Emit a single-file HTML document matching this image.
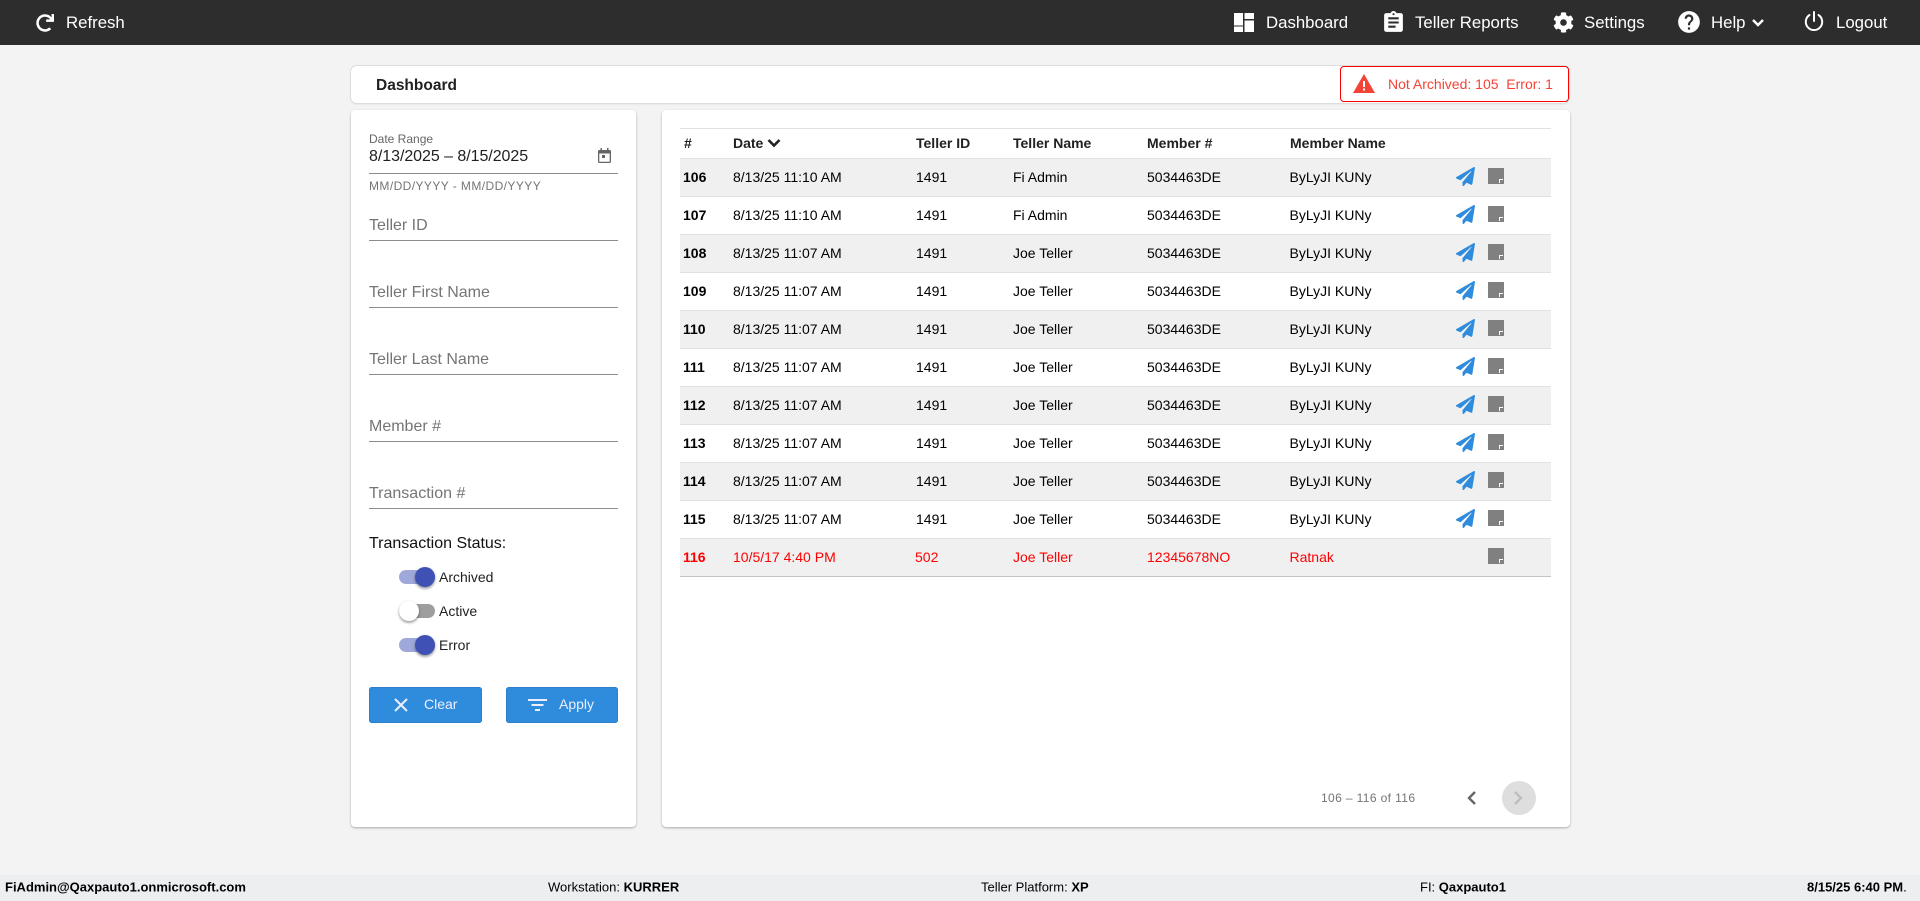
<!DOCTYPE html>
<html lang="en"><head><meta charset="utf-8"><title>Dashboard</title>
<style>
html,body{margin:0;padding:0;width:1920px;height:901px;overflow:hidden;background:#f3f3f3;font-family:"Liberation Sans",Arial,sans-serif;color:#000}
.a{position:absolute;white-space:nowrap}
.t{position:absolute;white-space:nowrap;transform:translateY(-50%)}
#top{position:absolute;left:0;top:0;width:1920px;height:45px;background:#2d2d2d}
#top .t{color:#fff;font-size:16.8px;top:23px}
#top svg{position:absolute;fill:#fff}
.card{position:absolute;background:#fff;border-radius:4px;box-shadow:0 1px 2px rgba(0,0,0,.3)}
.line{position:absolute;left:369px;width:249px;height:1px;background:#8c8c8c}
.ph{position:absolute;left:369px;font-size:16px;color:#757575;white-space:nowrap;transform:translateY(-50%)}
.row{position:absolute;left:680px;width:871px;height:37px;border-bottom:1px solid #e0e0e6;font-size:14px;line-height:36px}
.row.g{background:#f0f0f1}
.row span{position:absolute;top:0;white-space:nowrap}
.c0{left:3px;font-weight:700}.c1{left:53px}.c2{left:236px}.c3{left:333px}.c4{left:467px}.c5{left:609.500px}
.row svg{position:absolute}
.red,.red span{color:#f00}
.hd{position:absolute;top:142.500px;font-size:14px;font-weight:700;color:#212121;transform:translateY(-50%);white-space:nowrap}
.tr{position:absolute;left:399px;width:36px;height:14px;border-radius:7px}
.th{position:absolute;width:20px;height:20px;border-radius:50%;box-shadow:0 2px 2px rgba(0,0,0,.25),0 1px 3px rgba(0,0,0,.2)}
.lb{position:absolute;left:439px;font-size:14px;color:#212121;transform:translateY(-50%)}
.btn{position:absolute;top:687px;height:36px;background:#2f8cdd;border-radius:3px;box-shadow:inset 0 0 0 1px #2b80c9}
.btn span{position:absolute;top:17px;transform:translateY(-50%);color:#eef;font-size:14px}
#foot{position:absolute;left:0;top:875px;width:1920px;height:26px;background:#eceef0;font-size:13px}
#foot .t{top:12px;color:#000}
</style></head><body>
<svg width="0" height="0" style="position:absolute">
<defs>
<symbol id="send" viewBox="0 0 512 512"><path fill="#2f8cdd" d="M476 3.2L12.5 270.6c-18.1 10.4-15.8 35.6 2.2 43.2L121 358.4l287.3-253.2c5.5-4.9 13.3 2.6 8.6 8.3L176 407v80.5c0 23.6 28.5 32.9 42.5 15.8L282 426l124.6 52.2c14.2 6 30.4-2.9 33-18.2l72-432C515 7.8 493.3-6.8 476 3.2z"/></symbol>
<symbol id="note" viewBox="0 0 16 16"><path fill="#808080" d="M0 0H16V16H0Z"/><path fill="#fff" d="M11 11H15V12H12V15H11Z"/></symbol>
</defs></svg>

<div id="top">
<svg style="left:36px;top:14px" width="18" height="18" viewBox="0 0 512 512"><path d="M500.33 0h-47.41a12 12 0 0 0-12 12.57l4 82.76A247.42 247.42 0 0 0 256 8C119.34 8 7.9 119.53 8 256.19 8.1 393.07 119.1 504 256 504a247.1 247.1 0 0 0 166.18-63.91 12 12 0 0 0 .48-17.43l-34-34a12 12 0 0 0-16.38-.55A176 176 0 1 1 402.1 157.8l-101.53-4.87a12 12 0 0 0-12.57 12v47.41a12 12 0 0 0 12 12h200.33a12 12 0 0 0 12-12V12a12 12 0 0 0-12-12z"/></svg>
<div class="t" style="left:66px">Refresh</div>
<svg style="left:1234px;top:13px" width="20" height="19" viewBox="0 0 20 19"><path d="M0 0H9V12.500H0ZM0 13.500H9V19H0ZM10.500 0H20V6H10.500ZM10.500 7.500H20V19H10.500Z"/></svg>
<div class="t" style="left:1266px">Dashboard</div>
<svg style="left:1381px;top:10px" width="25" height="25" viewBox="0 0 24 24"><path d="M19 3h-4.18C14.4 1.84 13.3 1 12 1c-1.3 0-2.4.84-2.82 2H5c-1.1 0-2 .9-2 2v14c0 1.1.9 2 2 2h14c1.1 0 2-.9 2-2V5c0-1.1-.9-2-2-2zm-7 0c.55 0 1 .45 1 1s-.45 1-1 1-1-.45-1-1 .45-1 1-1zm2 14H7v-2h7v2zm3-4H7v-2h10v2zm0-4H7V7h10v2z"/></svg>
<div class="t" style="left:1415px">Teller Reports</div>
<svg style="left:1553px;top:12px" width="21" height="21" viewBox="0 0 512 512"><path d="M487.4 315.7l-42.6-24.6c4.3-23.2 4.3-47 0-70.2l42.6-24.6c4.9-2.8 7.1-8.6 5.5-14-11.1-35.6-30-67.8-54.7-94.6-3.8-4.1-10-5.1-14.8-2.3L380.8 110c-17.9-15.4-38.5-27.3-60.8-35.1V25.8c0-5.6-3.9-10.5-9.4-11.7-36.7-8.2-74.3-7.8-109.2 0-5.5 1.2-9.4 6.1-9.4 11.7V75c-22.2 7.9-42.8 19.8-60.8 35.1L88.7 85.5c-4.9-2.8-11-1.9-14.8 2.3-24.7 26.7-43.6 58.9-54.7 94.6-1.7 5.4.6 11.2 5.5 14L67.3 221c-4.3 23.2-4.3 47 0 70.2l-42.6 24.6c-4.9 2.8-7.1 8.6-5.5 14 11.1 35.6 30 67.8 54.7 94.6 3.8 4.1 10 5.1 14.8 2.3l42.6-24.6c17.9 15.4 38.5 27.3 60.8 35.1v49.2c0 5.6 3.9 10.5 9.4 11.7 36.7 8.2 74.3 7.8 109.2 0 5.5-1.2 9.4-6.1 9.4-11.7v-49.2c22.2-7.9 42.8-19.8 60.8-35.1l42.6 24.6c4.9 2.8 11 1.9 14.8-2.3 24.7-26.7 43.6-58.9 54.7-94.6 1.5-5.5-.7-11.3-5.6-14.1zM256 336c-44.1 0-80-35.9-80-80s35.9-80 80-80 80 35.9 80 80-35.9 80-80 80z"/></svg>
<div class="t" style="left:1584px">Settings</div>
<svg style="left:1676px;top:9px" width="26" height="26" viewBox="0 0 24 24"><path d="M12 2C6.48 2 2 6.48 2 12s4.48 10 10 10 10-4.48 10-10S17.52 2 12 2zm1 17h-2v-2h2v2zm2.07-7.75l-.9.92C13.45 12.9 13 13.5 13 15h-2v-.5c0-1.1.45-2.1 1.17-2.83l1.24-1.26c.37-.36.59-.86.59-1.41 0-1.1-.9-2-2-2s-2 .9-2 2H8c0-2.21 1.79-4 4-4s4 1.79 4 4c0 .88-.36 1.68-.93 2.25z"/></svg>
<div class="t" style="left:1711px">Help</div>
<svg style="left:1751px;top:18px;fill:none;stroke:#fff;stroke-width:2.4" width="14" height="10" viewBox="0 0 14 10"><path d="M2 2l5 5 5-5"/></svg>
<svg style="left:1803px;top:10px;fill:none;stroke:#fff;stroke-width:2;stroke-linecap:round" width="22" height="22" viewBox="0 0 22 22"><path d="M11 2v9M6.5 5A8.2 8.2 0 1 0 15.5 5"/></svg>
<div class="t" style="left:1836px">Logout</div>
</div>

<div class="card" style="left:351px;top:66px;width:1218px;height:37px;border-radius:6px;box-shadow:0 0 0 1px #ddd,0 1px 2px rgba(0,0,0,.1)"></div>
<div class="t" style="left:376px;top:86px;font-size:15.500px;font-weight:700;color:#212121">Dashboard</div>
<div class="a" style="left:1340px;top:66px;width:227px;height:34px;border:1px solid #f00;border-radius:4px;background:#fff"></div>
<svg class="a" style="left:1353px;top:74px" width="22" height="19" viewBox="0 0 22 19"><path fill="#f44336" d="M11 0L22 19H0ZM10 7v6h2V7ZM10 14.500v2h2v-2Z" fill-rule="evenodd"/></svg>
<div class="t" style="left:1388px;top:84px;font-size:14px;color:#f44336;white-space:pre">Not Archived: 105  Error: 1</div>

<div class="card" style="left:351px;top:110px;width:285px;height:717px"></div>
<div class="t" style="left:369px;top:139px;font-size:12px;color:#666">Date Range</div>
<div class="t" style="left:369px;top:156.500px;font-size:16px;color:#212121;letter-spacing:-.05px">8/13/2025 – 8/15/2025</div>
<svg class="a" style="left:598px;top:148px" width="13" height="15" viewBox="0 0 13 15"><path fill="#666" fill-rule="evenodd" d="M2.500 0h1.500v2h5V0h1.500v2h1A1.500 1.500 0 0 1 13 3.500V13.500A1.500 1.500 0 0 1 11.500 15H1.500A1.500 1.500 0 0 1 0 13.500V3.500A1.500 1.500 0 0 1 1.500 2H2.500ZM1.300 5.500v8.200h10.400V5.500ZM4 7h3v3H4Z"/></svg>
<div class="line" style="top:173px"></div>
<div class="t" style="left:369px;top:185.500px;font-size:12px;color:#757575;letter-spacing:.42px">MM/DD/YYYY - MM/DD/YYYY</div>
<div class="ph" style="top:226px">Teller ID</div><div class="line" style="top:240px"></div>
<div class="ph" style="top:293px">Teller First Name</div><div class="line" style="top:307px"></div>
<div class="ph" style="top:360px">Teller Last Name</div><div class="line" style="top:374px"></div>
<div class="ph" style="top:427px">Member #</div><div class="line" style="top:441px"></div>
<div class="ph" style="top:494px">Transaction #</div><div class="line" style="top:508px"></div>
<div class="t" style="left:369px;top:543.500px;font-size:16px;color:#111">Transaction Status:</div>
<div class="tr" style="top:570px;background:#9fa8da"></div><div class="th" style="left:415px;top:567px;background:#3f51b5"></div><div class="lb" style="top:576.500px">Archived</div>
<div class="tr" style="top:604px;background:#9e9e9e"></div><div class="th" style="left:399px;top:601px;background:#fff"></div><div class="lb" style="top:610.500px">Active</div>
<div class="tr" style="top:638px;background:#9fa8da"></div><div class="th" style="left:415px;top:635px;background:#3f51b5"></div><div class="lb" style="top:644.500px">Error</div>
<div class="btn" style="left:369px;width:113px"><svg class="a" style="left:25px;top:11px" width="14" height="14" viewBox="0 0 14 14"><path fill="none" stroke="#eef" stroke-width="2" d="M1 1l12 12M13 1L1 13"/></svg><span style="left:55px">Clear</span></div>
<div class="btn" style="left:506px;width:112px"><svg class="a" style="left:22px;top:11px" width="19" height="14" viewBox="0 0 19 14"><path fill="none" stroke="#eef" stroke-width="2" d="M0 2h19M3.500 7h12M7 12h5"/></svg><span style="left:53px">Apply</span></div>

<div class="card" style="left:662px;top:110px;width:908px;height:717px"></div>
<div class="a" style="left:680px;top:128px;width:871px;height:1px;background:#e0e0e6"></div>
<div class="hd" style="left:684px">#</div>
<div class="hd" style="left:733px">Date</div>
<svg class="a" style="left:767px;top:138px;fill:none;stroke:#212121;stroke-width:2.600" width="14" height="10" viewBox="0 0 14 10"><path d="M1.500 2l5.500 5.500 5.500-5.500"/></svg>
<div class="hd" style="left:916px">Teller ID</div>
<div class="hd" style="left:1013px">Teller Name</div>
<div class="hd" style="left:1147px">Member #</div>
<div class="hd" style="left:1290px">Member Name</div>
<div class="a" style="left:680px;top:158px;width:871px;height:1px;background:#e0e0e6"></div>

<div class="row g" style="top:159px"><span class="c0">106</span><span class="c1">8/13/25 11:10 AM</span><span class="c2">1491</span><span class="c3">Fi Admin</span><span class="c4">5034463DE</span><span class="c5">ByLyJI KUNy</span><svg style="left:776px;top:8px" width="19" height="19"><use href="#send"/></svg><svg style="left:808px;top:9px" width="16" height="16"><use href="#note"/></svg></div>
<div class="row" style="top:197px"><span class="c0">107</span><span class="c1">8/13/25 11:10 AM</span><span class="c2">1491</span><span class="c3">Fi Admin</span><span class="c4">5034463DE</span><span class="c5">ByLyJI KUNy</span><svg style="left:776px;top:8px" width="19" height="19"><use href="#send"/></svg><svg style="left:808px;top:9px" width="16" height="16"><use href="#note"/></svg></div>
<div class="row g" style="top:235px"><span class="c0">108</span><span class="c1">8/13/25 11:07 AM</span><span class="c2">1491</span><span class="c3">Joe Teller</span><span class="c4">5034463DE</span><span class="c5">ByLyJI KUNy</span><svg style="left:776px;top:8px" width="19" height="19"><use href="#send"/></svg><svg style="left:808px;top:9px" width="16" height="16"><use href="#note"/></svg></div>
<div class="row" style="top:273px"><span class="c0">109</span><span class="c1">8/13/25 11:07 AM</span><span class="c2">1491</span><span class="c3">Joe Teller</span><span class="c4">5034463DE</span><span class="c5">ByLyJI KUNy</span><svg style="left:776px;top:8px" width="19" height="19"><use href="#send"/></svg><svg style="left:808px;top:9px" width="16" height="16"><use href="#note"/></svg></div>
<div class="row g" style="top:311px"><span class="c0">110</span><span class="c1">8/13/25 11:07 AM</span><span class="c2">1491</span><span class="c3">Joe Teller</span><span class="c4">5034463DE</span><span class="c5">ByLyJI KUNy</span><svg style="left:776px;top:8px" width="19" height="19"><use href="#send"/></svg><svg style="left:808px;top:9px" width="16" height="16"><use href="#note"/></svg></div>
<div class="row" style="top:349px"><span class="c0">111</span><span class="c1">8/13/25 11:07 AM</span><span class="c2">1491</span><span class="c3">Joe Teller</span><span class="c4">5034463DE</span><span class="c5">ByLyJI KUNy</span><svg style="left:776px;top:8px" width="19" height="19"><use href="#send"/></svg><svg style="left:808px;top:9px" width="16" height="16"><use href="#note"/></svg></div>
<div class="row g" style="top:387px"><span class="c0">112</span><span class="c1">8/13/25 11:07 AM</span><span class="c2">1491</span><span class="c3">Joe Teller</span><span class="c4">5034463DE</span><span class="c5">ByLyJI KUNy</span><svg style="left:776px;top:8px" width="19" height="19"><use href="#send"/></svg><svg style="left:808px;top:9px" width="16" height="16"><use href="#note"/></svg></div>
<div class="row" style="top:425px"><span class="c0">113</span><span class="c1">8/13/25 11:07 AM</span><span class="c2">1491</span><span class="c3">Joe Teller</span><span class="c4">5034463DE</span><span class="c5">ByLyJI KUNy</span><svg style="left:776px;top:8px" width="19" height="19"><use href="#send"/></svg><svg style="left:808px;top:9px" width="16" height="16"><use href="#note"/></svg></div>
<div class="row g" style="top:463px"><span class="c0">114</span><span class="c1">8/13/25 11:07 AM</span><span class="c2">1491</span><span class="c3">Joe Teller</span><span class="c4">5034463DE</span><span class="c5">ByLyJI KUNy</span><svg style="left:776px;top:8px" width="19" height="19"><use href="#send"/></svg><svg style="left:808px;top:9px" width="16" height="16"><use href="#note"/></svg></div>
<div class="row" style="top:501px"><span class="c0">115</span><span class="c1">8/13/25 11:07 AM</span><span class="c2">1491</span><span class="c3">Joe Teller</span><span class="c4">5034463DE</span><span class="c5">ByLyJI KUNy</span><svg style="left:776px;top:8px" width="19" height="19"><use href="#send"/></svg><svg style="left:808px;top:9px" width="16" height="16"><use href="#note"/></svg></div>
<div class="row g red" style="top:539px;border-bottom-color:#c4c4c4"><span class="c0">116</span><span class="c1">10/5/17 4:40 PM</span><span class="c2" style="left:235px">502</span><span class="c3">Joe Teller</span><span class="c4">12345678NO</span><span class="c5">Ratnak</span><svg style="left:808px;top:9px" width="16" height="16"><use href="#note"/></svg></div>

<div class="t" style="left:1321px;top:797.500px;font-size:12px;color:#757575;letter-spacing:.38px">106 – 116 of 116</div>
<svg class="a" style="left:1464px;top:789px;fill:none;stroke:#666;stroke-width:2.400" width="14" height="18" viewBox="0 0 14 18"><path d="M11 3L5 9l6 6"/></svg>
<div class="a" style="left:1502px;top:781px;width:34px;height:34px;border-radius:50%;background:#dedede"></div>
<svg class="a" style="left:1512px;top:789px;fill:none;stroke:#bdbdbd;stroke-width:2.400" width="14" height="18" viewBox="0 0 14 18"><path d="M3 3l6 6-6 6"/></svg>

<div id="foot">
<div class="t" style="left:5px;font-weight:700">FiAdmin@Qaxpauto1.onmicrosoft.com</div>
<div class="t" style="left:548px">Workstation: <b>KURRER</b></div>
<div class="t" style="left:981px">Teller Platform: <b>XP</b></div>
<div class="t" style="left:1420px">FI: <b>Qaxpauto1</b></div>
<div class="t" style="left:1807px"><b>8/15/25 6:40 PM</b>.</div>
</div>
</body></html>
